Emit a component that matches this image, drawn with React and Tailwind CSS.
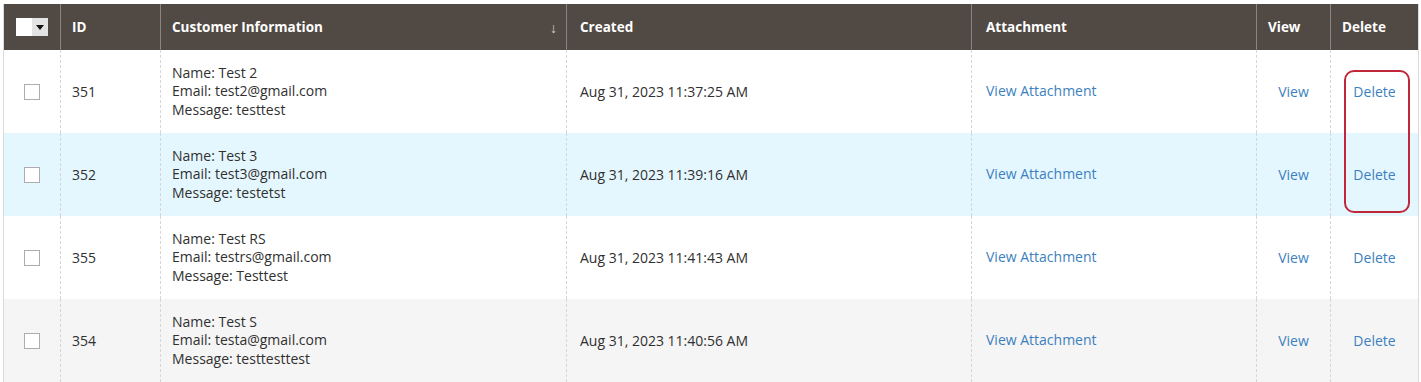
import React from 'react';

const rows = [
  { id: 351, name: 'Test 2', email: 'test2@gmail.com', message: 'testtest', created: 'Aug 31, 2023 11:37:25 AM', bg: 'bg-white' },
  { id: 352, name: 'Test 3', email: 'test3@gmail.com', message: 'testetst', created: 'Aug 31, 2023 11:39:16 AM', bg: 'bg-[#e5f7fe]' },
  { id: 355, name: 'Test RS', email: 'testrs@gmail.com', message: 'Testtest', created: 'Aug 31, 2023 11:41:43 AM', bg: 'bg-white' },
  { id: 354, name: 'Test S', email: 'testa@gmail.com', message: 'testtesttest', created: 'Aug 31, 2023 11:40:56 AM', bg: 'bg-[#f5f5f5]' },
];

const HeaderCheckbox = () => (
  <div className="flex h-[18px] w-[32px] ml-[12px]">
    <div className="w-[16px] h-full bg-white" />
    <div className="w-[16px] h-full bg-[#e3e3e3] flex items-center justify-center">
      <svg width="8" height="5" viewBox="0 0 8 5"><path d="M0 0h8L4 5z" fill="#111" /></svg>
    </div>
  </div>
);

const th = 'text-left font-bold text-white text-[13.5px] border-l border-[#8a837f] px-[11px] align-middle';
const td = 'border-l border-dashed border-[#d6d6d6] align-middle text-[14px]';
const dark = ' text-[#303030]';
const link = ' text-[#3c7fbe]';

export default function App() {
  return (
    <div className="bg-white w-[1421px] h-[382px] pt-[4px] pl-[3px] overflow-hidden" style={{ fontFamily: '"Open Sans", "Liberation Sans", sans-serif' }}>
      <div className="relative w-[1415px]">
        <table className="table-fixed border-collapse w-[1415px] border-l border-r border-[#dadada]">
          <colgroup>
            <col className="w-[57px]" />
            <col className="w-[100px]" />
            <col className="w-[406px]" />
            <col className="w-[405px]" />
            <col className="w-[285px]" />
            <col className="w-[74px]" />
            <col className="w-[88px]" />
          </colgroup>
          <thead>
            <tr className="h-[46px] bg-[#514943]">
              <th className="align-middle"><HeaderCheckbox /></th>
              <th className={th}>ID</th>
              <th className={th}>
                <div className="flex justify-between items-center">
                  <span>Customer Information</span>
                  <span className="font-normal text-[#d8d3cf] text-[14px] -mr-[2px]">↓</span>
                </div>
              </th>
              <th className={th + ' pl-[13px]'}>Created</th>
              <th className={th + ' pl-[14px]'}>Attachment</th>
              <th className={th}>View</th>
              <th className={th}>Delete</th>
            </tr>
          </thead>
          <tbody>
            {rows.map((r) => (
              <tr key={r.id} className={`h-[83px] ${r.bg}`}>
                <td className="align-middle">
                  <div className="w-[16px] h-[16px] ml-[20px] bg-white border border-[#adadad]" />
                </td>
                <td className={td + dark + ' pl-[11px]'}>{r.id}</td>
                <td className={td + dark + ' pl-[11px] leading-[18.5px]'}>
                  <div>Name: {r.name}</div>
                  <div>Email: {r.email}</div>
                  <div>Message: {r.message}</div>
                </td>
                <td className={td + dark + ' pl-[13px]'}>{r.created}</td>
                <td className={td + link + ' pl-[14px]'}>
                  <div className="-mt-[3px]">View Attachment</div>
                </td>
                <td className={td + link + ' text-center'}>View</td>
                <td className={td + link + ' text-center'}>Delete</td>
              </tr>
            ))}
          </tbody>
        </table>
        <div className="absolute left-[1341px] top-[66px] w-[66px] h-[143px] border-2 border-[#c0273a] rounded-[10px] pointer-events-none" />
      </div>
    </div>
  );
}
